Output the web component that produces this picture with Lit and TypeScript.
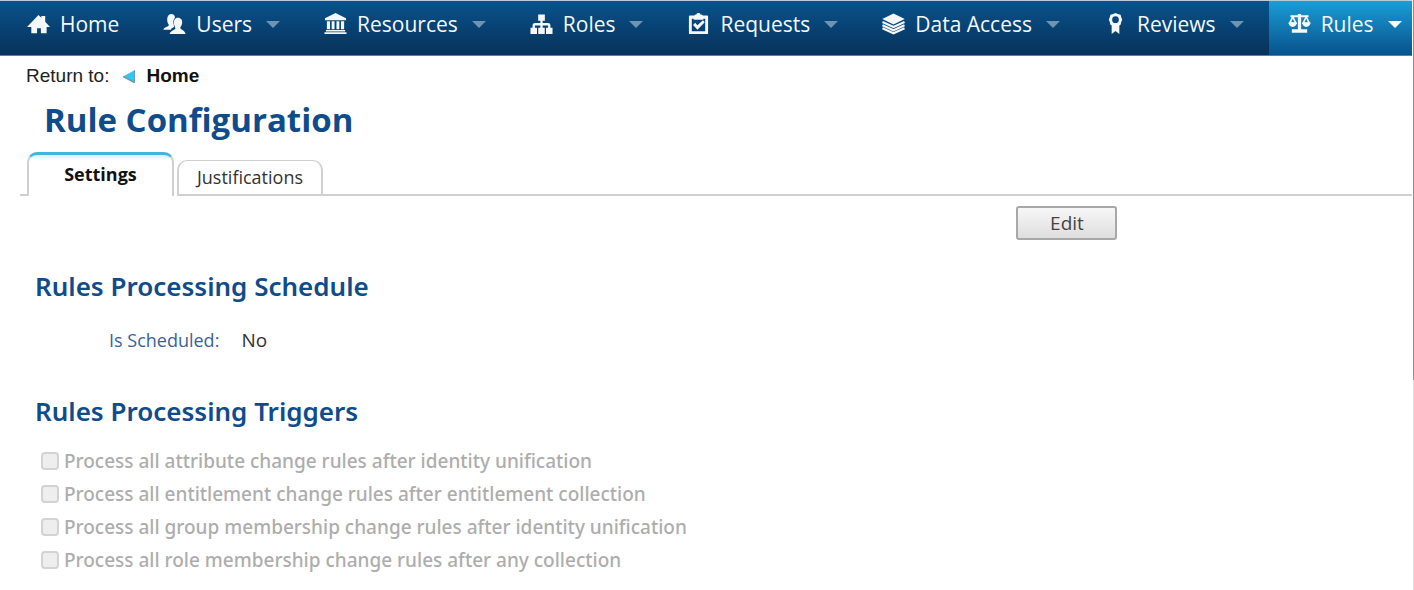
import { LitElement, html, svg, css } from "lit";
import { customElement, property } from "lit/decorators.js";

const icons: Record<string, unknown> = {
  home: svg`<path d="M12 2 L15 5 V3 H19 V9 L24 14.500 H20.500 V21 H14.500 V16 H10.500 V21 H4.500 V14.500 H0 Z"/>`,
  users: svg`<path d="M8.500 1 C11 1 12.700 2.500 12.500 5 C10.500 7 10.300 10 11.300 12.500 L11.500 14.500 L8.500 16.500 V17.500 H.5 C.7 15 3.500 15 5.500 13.500 C6.500 12.800 6 12 5.200 11 C3.500 7 4.500 1 8.500 1 Z"/><path d="M15.500 5 C18.800 5 20.400 7.500 20 10.500 C19.800 12.700 18.500 14 18 15.500 C18 17.500 23 18 23.500 22 H7 C7.500 18.500 12.500 18 13 16 C12.500 14.500 11.500 13 11.400 11 C11.100 7.500 12.500 5 15.500 5 Z"/>`,
  resources: svg`<path d="M12 0 L23 5.500 V7.500 H1 V5.500 Z M3 8.500 H6.300 V17 H3 Z M8 8.500 H11 V17 H8 Z M13 8.500 H16 V17 H13 Z M17.700 8.500 H21 V17 H17.700 Z M2 17.700 H22 V19.200 H2 Z M.5 20 H23.500 V22 H.5 Z"/>`,
  roles: svg`<path d="M8.500 1.500 H15.500 V8 H13.200 V10.500 H18.500 Q21.300 10.500 21.300 13 V15.500 H23.500 V22 H16.700 V15.500 H18.900 V13 H13.200 V15.500 H15.400 V22 H8.600 V15.500 H10.800 V13 H5.100 V15.500 H7.300 V22 H.5 V15.500 H2.700 V13 Q2.700 10.500 5.500 10.500 H10.800 V8 H8.500 Z"/>`,
  requests: svg`<path fill-rule="evenodd" d="M3 2.500 H7.500 Q8 1.500 9.800 1.500 Q10 0 12 0 Q14 0 14.200 1.500 Q16 1.500 16.500 2.500 H21 Q22 2.500 22 3.500 V21 Q22 22 21 22 H3 Q2 22 2 21 V3.500 Q2 2.500 3 2.500 Z M5 6 V19 H19 V6 H17 V7 H7 V6 Z"/><path d="M6.300 12.500 L8.600 10.300 L10.800 12.700 L16.700 7.500 L18.500 9.700 L10.900 17.500 Z"/>`,
  data: svg`<path d="M12 .5 L23.700 6.300 L12 12.100 L.3 6.300 Z"/><path fill="none" stroke="currentColor" stroke-width="2.200" d="M.5 9.400 L12 14.600 L23.500 9.400 M.5 12.800 L12 18 L23.500 12.800 M.5 16 L12 21.200 L23.500 16"/>`,
  reviews: svg`<path fill-rule="evenodd" d="M12 0 L14.500 1 L17.300 1.700 L18 4.500 L19 7 L18 9.500 L17.300 12.200 L16 13 V22 L12 18.700 L8 22 V13 L6.700 12.200 L6 9.500 L5 7 L6 4.500 L6.700 1.700 L9.500 1 Z M12 3.500 A3.500 3.500 0 1 0 12 10.500 A3.500 3.500 0 1 0 12 3.500 Z"/>`,
  rules: svg`<path d="M10.300 1 H13.700 V2.300 H21.500 V4.500 H13.700 V17 H20 V20.500 H4 V17 H10.300 V4.500 H2.500 V2.300 H10.300 Z"/><path fill="none" stroke="currentColor" stroke-width="1.700" d="M5 4 L1.800 10.500 H8.200 Z M19 4 L15.800 10.500 H22.200 Z"/><path d="M.5 10 H9.300 Q8.500 14.500 4.900 14.500 Q1.200 14.500 .5 10 Z M14.700 10 H23.500 Q22.800 14.500 19.100 14.500 Q15.500 14.500 14.700 10 Z"/>`,
};

interface NavEntry {
  label: string;
  icon: string;
  menu: boolean;
  current?: boolean;
}

const entries: NavEntry[] = [
  { label: "Home", icon: "home", menu: false },
  { label: "Users", icon: "users", menu: true },
  { label: "Resources", icon: "resources", menu: true },
  { label: "Roles", icon: "roles", menu: true },
  { label: "Requests", icon: "requests", menu: true },
  { label: "Data Access", icon: "data", menu: true },
  { label: "Reviews", icon: "reviews", menu: true },
  { label: "Rules", icon: "rules", menu: true, current: true },
];

const triggers = [
  "Process all attribute change rules after identity unification",
  "Process all entitlement change rules after entitlement collection",
  "Process all group membership change rules after identity unification",
  "Process all role membership change rules after any collection",
];

@customElement("main-nav")
export class MainNav extends LitElement {
  @property({ attribute: false }) entries: NavEntry[] = [];

  static styles = css`
    :host {
      display: block;
    }
    .bar {
      display: flex;
      height: 54px;
      padding-left: 8px;
      border-top: 1px solid #b9cad9;
      border-bottom: 1px solid #2597b0;
      background: linear-gradient(#08528c, #073259);
      overflow: hidden;
    }
    .entry {
      display: flex;
      align-items: center;
      flex: none;
      box-sizing: border-box;
      height: 54px;
      padding: 0 25px 8px 19px;
      color: #f4f8fb;
      font-size: 21px;
      line-height: 30px;
      text-decoration: none;
      white-space: nowrap;
    }
    .current {
      flex: 1 0 auto;
      padding-right: 12px;
      background: linear-gradient(#1b9dd6, #08528c);
    }
    .icon {
      width: 23px;
      height: 23px;
      margin-right: 10px;
      fill: currentColor;
    }
    .caret {
      width: 14px;
      height: 7px;
      margin-left: 14px;
      fill: #6f93b0;
    }
    .current .caret {
      fill: #ffffff;
    }
  `;

  render() {
    return html`<nav class="bar">
      ${this.entries.map(
        (e) => html`<a
          class=${e.current ? "entry current" : "entry"}
          href="#"
          aria-current=${e.current ? "page" : "false"}
          ><svg class="icon" viewBox="0 0 24 24" aria-hidden="true">${icons[e.icon]}</svg
          ><span>${e.label}</span>${e.menu
            ? html`<svg class="caret" viewBox="0 0 14 7" aria-hidden="true">
                <path d="M0 0 H14 L7 7 Z" />
              </svg>`
            : ""}</a
        >`
      )}
    </nav>`;
  }
}

@customElement("app-root")
export class AppRoot extends LitElement {
  static styles = css`
    :host {
      display: block;
      box-sizing: border-box;
      min-height: 100vh;
      padding-right: 2px;
      background: linear-gradient(#8e8e8e 380px, #dddddd 380px) right / 1px 100% no-repeat #ffffff;
      color: #333333;
      font-family: "Open Sans", sans-serif;
    }
    .crumbs {
      display: flex;
      align-items: center;
      padding: 8px 26px 0;
      color: #222222;
      font-family: "Liberation Sans", Arial, sans-serif;
      font-size: 19px;
      line-height: 24px;
    }
    .back {
      display: flex;
      align-items: center;
      gap: 11px;
      margin-left: 14px;
      color: #111111;
      font-weight: bold;
      text-decoration: none;
    }
    .title {
      margin: 0;
      padding: 10px 44px 0;
      color: #0f4c8c;
      font-size: 33px;
      font-weight: 700;
      line-height: 44px;
    }
    .tabs {
      display: flex;
      align-items: flex-end;
      margin: 10px 0 0 20px;
    }
    .edge {
      width: 7px;
      height: 2px;
      background: #d0d0d0;
    }
    .rest {
      flex: 1;
      height: 2px;
      background: #d0d0d0;
    }
    .tab {
      box-sizing: border-box;
      width: 146px;
      height: 36px;
      padding: 0;
      border: 2px solid #d0d0d0;
      border-top-width: 1px;
      border-radius: 10px 10px 0 0;
      background: #ffffff;
      color: #333333;
      font-family: inherit;
      font-size: 18px;
      line-height: 33px;
    }
    .spacer {
      width: 3px;
    }
    .selected {
      width: 147px;
      height: 44px;
      padding-bottom: 3px;
      border-top: 3px solid #45b3e0;
      border-bottom: 0;
      background: linear-gradient(#d5eefa, #ffffff 5px);
      color: #111111;
      font-weight: 700;
      line-height: 38px;
    }
    .actions {
      display: flex;
      justify-content: flex-end;
      width: 79%;
      padding: 10px 0 0 2px;
    }
    .edit {
      box-sizing: border-box;
      width: 101px;
      height: 34px;
      padding: 0;
      border: 2px solid #a8a8a8;
      border-radius: 3px;
      background: linear-gradient(#f7f7f7, #dedede);
      color: #444444;
      font-family: inherit;
      font-size: 19px;
      line-height: 28px;
    }
    .section {
      padding: 29px 35px 0;
    }
    .heading {
      margin: 0;
      color: #0f4c8c;
      font-family: "Noto Sans", "Open Sans", sans-serif;
      font-size: 26px;
      font-weight: 600;
      line-height: 34px;
    }
    .field {
      display: flex;
      gap: 22px;
      margin: 0;
      padding: 24px 0 12px 74px;
      font-size: 18px;
      line-height: 26px;
    }
    .name {
      color: #3a6299;
    }
    .value {
      margin: 0;
      font-size: 19px;
    }
    .triggers {
      margin: 0;
      padding: 16px 0 0 6px;
      list-style: none;
    }
    .trigger {
      display: flex;
      align-items: center;
      gap: 5px;
      height: 33px;
      color: #adadad;
      font-family: "Noto Sans", "Open Sans", sans-serif;
      font-size: 19px;
      font-weight: 500;
      line-height: 26px;
    }
    .box {
      appearance: none;
      box-sizing: border-box;
      width: 18px;
      height: 18px;
      margin: 0;
      border: 2px solid #d3d3d3;
      border-radius: 4px;
      background: #eeeeee;
    }
  `;

  render() {
    return html`
      <main-nav .entries=${entries}></main-nav>
      <div class="crumbs">
        <span>Return to:</span>
        <a class="back" href="#"
          ><svg width="12" height="13" viewBox="0 0 12 13" aria-hidden="true">
            <path d="M0 6.500 L12 0 V13 Z" fill="#35c4f0" />
            <path d="M0 6.500 L12 13 V0" fill="none" stroke="#7a8f96" stroke-width="1.200" /></svg
          ><span>Home</span></a
        >
      </div>
      <h1 class="title">Rule Configuration</h1>
      <div class="tabs" role="tablist">
        <span class="edge"></span>
        <button class="tab selected" role="tab" aria-selected="true">Settings</button>
        <span class="spacer"></span>
        <button class="tab" role="tab" aria-selected="false">Justifications</button>
        <span class="rest"></span>
      </div>
      <div class="actions"><button class="edit">Edit</button></div>
      <section class="section">
        <h2 class="heading">Rules Processing Schedule</h2>
        <dl class="field">
          <dt class="name">Is Scheduled:</dt>
          <dd class="value">No</dd>
        </dl>
      </section>
      <section class="section">
        <h2 class="heading">Rules Processing Triggers</h2>
        <ul class="triggers">
          ${triggers.map(
            (t, i) => html`<li class="trigger">
              <input class="box" type="checkbox" id="trigger-${i}" disabled />
              <label for="trigger-${i}">${t}</label>
            </li>`
          )}
        </ul>
      </section>
    `;
  }
}
